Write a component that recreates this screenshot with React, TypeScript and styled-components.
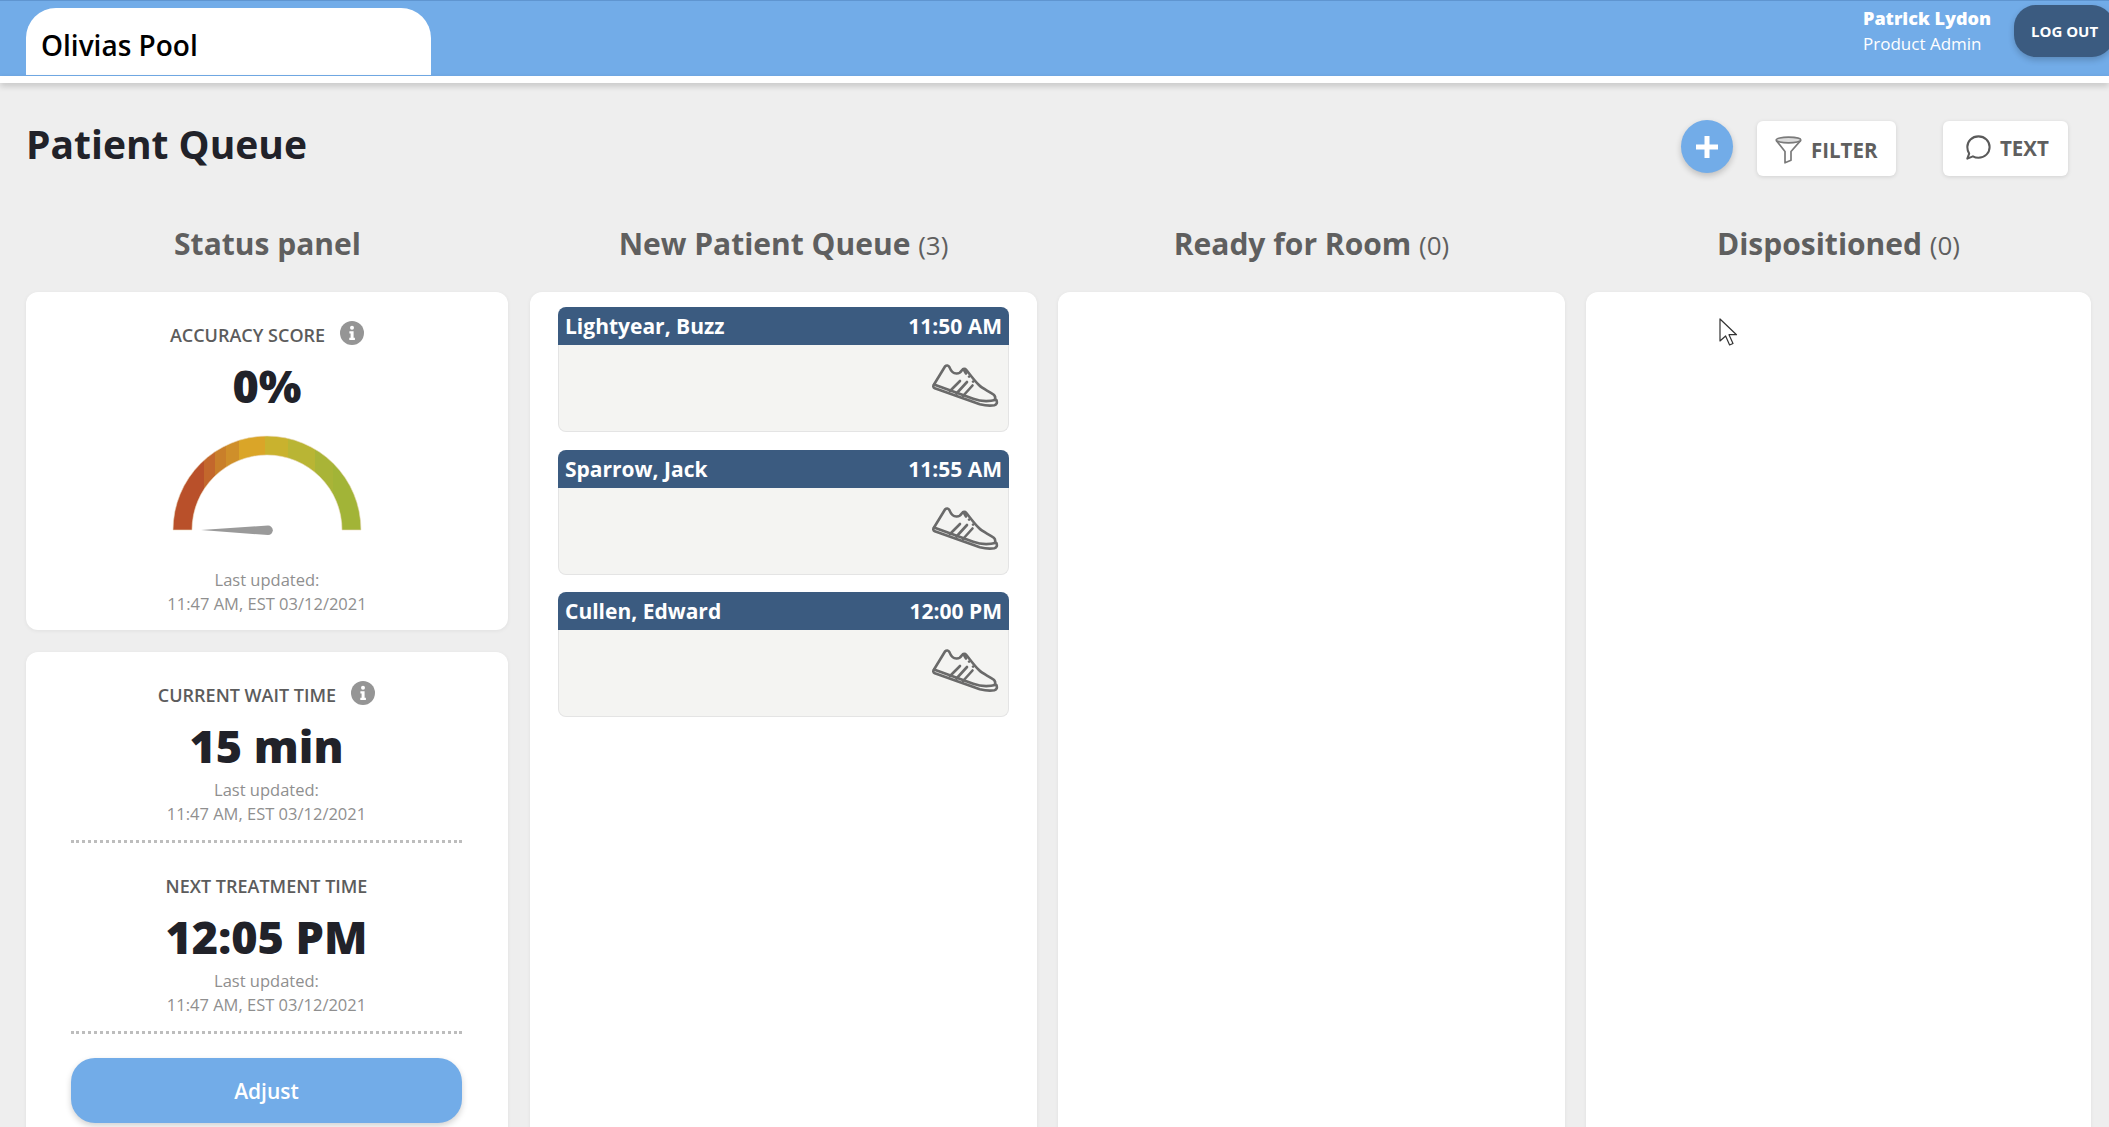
import styled, { createGlobalStyle } from "styled-components";

const patients = [
  { name: "Lightyear, Buzz", time: "11:50 AM" },
  { name: "Sparrow, Jack", time: "11:55 AM" },
  { name: "Cullen, Edward", time: "12:00 PM" },
];

// gauge colours come in vertical bands, [end x in svg units, colour]
const gaugeBands: [number, string][] = [
  [36.7, "#b9502a"],
  [47.7, "#c3672c"],
  [58.7, "#c97f2a"],
  [72, "#cf8f2a"],
  [97.7, "#daa528"],
  [121, "#c9b22e"],
  [147.7, "#b9b534"],
  [166, "#a9b437"],
  [194, "#a2b437"],
];

function Gauge() {
  return (
    <GaugeSvg width="200" height="110" viewBox="0 0 200 110">
      <defs>
        <linearGradient id="gaugeBands" gradientUnits="userSpaceOnUse" x1="6" y1="0" x2="194" y2="0">
          {gaugeBands.map(([end, color], i) => {
            const from = i === 0 ? 0 : (gaugeBands[i - 1][0] - 6) / 188;
            const to = (end - 6) / 188;
            return [
              <stop key={color + "a"} offset={from} stopColor={color} />,
              <stop key={color + "b"} offset={to} stopColor={color} />,
            ];
          })}
        </linearGradient>
      </defs>
      <path
        d="M6 97A94 94 0 0 1 194 97H175A75 75 0 0 0 25 97Z"
        fill="url(#gaugeBands)"
        stroke="#ecdcc0"
        strokeWidth="0.6"
      />
      <path d="M34 97L101 92.500a4.800 4.800 0 0 1 0 9.600L34 97Z" fill="#9a9a9a" />
    </GaugeSvg>
  );
}

function InfoIcon() {
  return (
    <svg width="24" height="24" viewBox="0 0 24 24">
      <circle cx="12" cy="12" r="12" fill="#959595" />
      <circle cx="12" cy="6.800" r="2" fill="#fff" />
      <path d="M9.400 10.200h4.200v6.600h1.300v2.200H9.300v-2.200h1.300v-4.400H9.400z" fill="#fff" />
    </svg>
  );
}

function ShoeIcon() {
  return (
    <svg width="68" height="44" viewBox="0 0 68 44" fill="none" stroke="#6a6a6a" strokeWidth="2.600" strokeLinejoin="round" strokeLinecap="round">
      <path d="M3 21.500L14 3.500c1.500-1.600 3.400-1.400 4.400.6 1.400 3.600 3.600 6.300 7 6.400 3 .1 4.500-1.400 5.600-3.400 1-1.500 3-1.700 4.200-.3 3.400 4 7.400 10 13 15.500 3.600 3.600 9.400 5.600 14.600 9.400 1.800 1.400 1.600 3.200 1.200 5" />
      <path d="M3 21.500c-1.200 1.600-.8 3 .8 3.800l45 16c4 1 11 1.600 14.600 1 2.400-.6 3.200-3 1.800-5.600-8 2.200-16 1.600-23-.9L3 21.500" />
      <path d="M19 28l10-10M25.500 30.500l10.500-11.500M32 33l9.500-10.500" />
      <path d="M33 7l2 3.500M38 13.600l.1.1M42 18.600l.1.1" />
    </svg>
  );
}

function FunnelIcon() {
  return (
    <svg width="27" height="28" viewBox="0 0 27 28" fill="none" stroke="#7a7a7a" strokeWidth="1.700" strokeLinejoin="round">
      <path d="M1.200 4.400L10 15.500v11.300l6-2.500v-8.800L25.800 4.400" fill="#fff" />
      <ellipse cx="13.500" cy="4" rx="12.300" ry="2.800" fill="#dcdcdc" />
    </svg>
  );
}

function BubbleIcon() {
  return (
    <svg width="26" height="27" viewBox="0 0 28 28" fill="none" stroke="#5a5a5a" strokeWidth="2.200" strokeLinejoin="round">
      <path d="M14.500 2C21.400 2 26.500 7 26.500 13.500S21.400 25 14.500 25c-2.200 0-4.200-.5-6-1.500L2.500 26l2-5.400C3.200 18.600 2.500 16.200 2.500 13.500 2.500 7 7.600 2 14.500 2Z" />
    </svg>
  );
}

export default function App() {
  return (
    <Page>
      <GlobalStyle />
      <Header>
        <PoolTab>Olivias Pool</PoolTab>
        <HeaderRight>
          <UserBlock>
            <UserName>Patrick Lydon</UserName>
            <UserRole>Product Admin</UserRole>
          </UserBlock>
          <LogOutButton>LOG OUT</LogOutButton>
        </HeaderRight>
      </Header>
      <HeaderStrip />
      <Main>
        <TitleRow>
          <PageTitle>Patient Queue</PageTitle>
          <Actions>
            <AddButton>
              <svg width="22" height="22" viewBox="0 0 22 22">
                <path d="M8.500 0h5v8.500H22v5h-8.500V22h-5v-8.500H0v-5h8.500z" fill="#fff" />
              </svg>
            </AddButton>
            <FilterButton>
              <FunnelIcon />
              FILTER
            </FilterButton>
            <TextButton>
              <BubbleIcon />
              TEXT
            </TextButton>
          </Actions>
        </TitleRow>
        <Board>
          <Column>
            <ColumnTitle>Status panel</ColumnTitle>
            <StatusStack>
              <ScoreCard>
                <MetricLabel>
                  ACCURACY SCORE
                  <InfoIcon />
                </MetricLabel>
                <MetricValue>0%</MetricValue>
                <Gauge />
                <Updated>
                  Last updated:
                  <br />
                  11:47 AM, EST 03/12/2021
                </Updated>
              </ScoreCard>
              <TimesCard>
                <MetricLabel>
                  CURRENT WAIT TIME
                  <InfoIcon />
                </MetricLabel>
                <MetricValue>15 min</MetricValue>
                <Updated>
                  Last updated:
                  <br />
                  11:47 AM, EST 03/12/2021
                </Updated>
                <DottedRule />
                <MetricLabel>NEXT TREATMENT TIME</MetricLabel>
                <MetricValue>12:05 PM</MetricValue>
                <Updated>
                  Last updated:
                  <br />
                  11:47 AM, EST 03/12/2021
                </Updated>
                <DottedRule />
                <AdjustButton>Adjust</AdjustButton>
              </TimesCard>
            </StatusStack>
          </Column>
          <Column>
            <ColumnTitle>
              New Patient Queue <Count>(3)</Count>
            </ColumnTitle>
            <QueuePanel>
              {patients.map((p) => (
                <PatientCard key={p.name}>
                  <PatientHead>
                    <span>{p.name}</span>
                    <span>{p.time}</span>
                  </PatientHead>
                  <PatientBody>
                    <ShoeIcon />
                  </PatientBody>
                </PatientCard>
              ))}
            </QueuePanel>
          </Column>
          <Column>
            <ColumnTitle>
              Ready for Room <Count>(0)</Count>
            </ColumnTitle>
            <QueuePanel />
          </Column>
          <Column>
            <ColumnTitle>
              Dispositioned <Count>(0)</Count>
            </ColumnTitle>
            <QueuePanel />
          </Column>
        </Board>
      </Main>
      <Cursor width="22" height="30" viewBox="0 0 22 30">
        <path d="M2 2v22l5.600-5 4 9 3.400-1.500-4-8.800h7.500L2 2Z" fill="#fff" stroke="#333" strokeWidth="1.200" strokeLinejoin="round" />
      </Cursor>
    </Page>
  );
}

const GlobalStyle = createGlobalStyle`
  html, body {
    margin: 0;
    padding: 0;
    height: 100%;
    overflow: hidden;
    background: #eeeeee;
  }
  * {
    box-sizing: border-box;
  }
`;

const Page = styled.div`
  position: relative;
  width: 2109px;
  height: 1127px;
  overflow: hidden;
  background: #eeeeee;
  font-family: "Open Sans", sans-serif;
`;

const Header = styled.header`
  height: 76px;
  background: #72ace8;
  border-top: 1px solid #5f95d0;
  display: flex;
  align-items: flex-end;
  justify-content: space-between;
  padding-left: 26px;
`;

const PoolTab = styled.div`
  width: 405px;
  height: 67px;
  margin-bottom: 1px;
  background: #fff;
  border-radius: 30px 30px 0 0;
  padding: 19px 0 0 15px;
  font-size: 28px;
  line-height: 36px;
  font-weight: 600;
  color: #000;
`;

const HeaderRight = styled.div`
  display: flex;
  align-self: flex-start;
  gap: 23px;
`;

const UserBlock = styled.div`
  padding-top: 5px;
  color: #fff;
`;

const UserName = styled.div`
  font-size: 18px;
  line-height: 25px;
  font-weight: 800;
`;

const UserRole = styled.div`
  font-size: 17px;
  line-height: 25px;
  font-weight: 400;
`;

const LogOutButton = styled.button`
  width: 100px;
  height: 52px;
  margin-top: 4px;
  margin-right: -5px;
  border: 0;
  border-radius: 22px;
  background: #3b5b80;
  box-shadow: 0 3px 6px rgba(0, 0, 0, 0.2);
  color: #fff;
  font-family: inherit;
  font-size: 15px;
  font-weight: 700;
  text-align: left;
  padding: 0 0 0 17px;
`;

const HeaderStrip = styled.div`
  height: 7px;
  background: #fff;
  box-shadow: 0 3px 6px rgba(0, 0, 0, 0.18);
  position: relative;
`;

const Main = styled.main`
  padding: 0 18px 0 26px;
`;

const TitleRow = styled.div`
  height: 128px;
  display: flex;
  justify-content: space-between;
  align-items: flex-start;
`;

const PageTitle = styled.h1`
  margin: 35px 0 0;
  font-size: 39px;
  line-height: 52px;
  font-weight: 700;
  color: #212229;
`;

const Actions = styled.div`
  display: flex;
  align-items: flex-start;
  padding: 37px 23px 0 0;
`;

const AddButton = styled.button`
  width: 52px;
  height: 53px;
  border: 0;
  border-radius: 50%;
  background: #72ace8;
  box-shadow: 0 3px 6px rgba(0, 0, 0, 0.2);
  display: flex;
  align-items: center;
  justify-content: center;
  padding: 0;
  margin-right: 24px;
`;

const ToolButton = styled.button`
  height: 55px;
  margin-top: 1px;
  border: 0;
  border-radius: 6px;
  background: #fff;
  box-shadow: 0 1px 4px rgba(0, 0, 0, 0.12);
  display: flex;
  align-items: center;
  color: #5f5f5f;
  font-family: inherit;
  font-size: 20.500px;
  font-weight: 700;
`;

const FilterButton = styled(ToolButton)`
  width: 139px;
  padding: 3px 0 0 18px;
  gap: 9px;
  margin-right: 47px;
`;

const TextButton = styled(ToolButton)`
  width: 125px;
  padding: 0 0 2px 22px;
  gap: 9px;
`;

const Board = styled.div`
  display: grid;
  grid-template-columns: 483px 507px 507px 505px;
  column-gap: 21px;
  align-items: start;
`;

const Column = styled.section`
  display: flex;
  flex-direction: column;
`;

const ColumnTitle = styled.h2`
  margin: 0;
  height: 81px;
  padding-top: 13px;
  text-align: center;
  font-size: 30px;
  line-height: 40px;
  font-weight: 700;
  color: #5f5f5f;
  white-space: nowrap;
`;

const Count = styled.span`
  font-size: 26px;
  font-weight: 400;
`;

const StatusStack = styled.div`
  width: 482px;
  display: flex;
  flex-direction: column;
  gap: 22px;
`;

const Panel = styled.div`
  background: #fff;
  border-radius: 12px;
  box-shadow: 0 1px 4px rgba(0, 0, 0, 0.06);
`;

const ScoreCard = styled(Panel)`
  height: 338px;
  padding-top: 28px;
  display: flex;
  flex-direction: column;
  align-items: center;
`;

const TimesCard = styled(Panel)`
  height: 560px;
  padding: 28px 46px 0 45px;
  display: flex;
  flex-direction: column;
  align-items: center;
`;

const MetricLabel = styled.div`
  display: flex;
  align-items: flex-start;
  gap: 15px;
  font-size: 18px;
  line-height: 30px;
  font-weight: 600;
  color: #5c5c5c;
  white-space: nowrap;

  svg {
    margin-top: 1px;
  }
`;

const MetricValue = styled.div`
  font-size: 45px;
  line-height: 60px;
  font-weight: 800;
  color: #212229;
  margin: 6px 0 2px;
  white-space: nowrap;
`;

const GaugeSvg = styled.svg`
  display: block;
  margin: 15px 0 25px;
`;

const Updated = styled.div`
  font-size: 16.500px;
  line-height: 24px;
  color: #8f8f8f;
  text-align: center;
  white-space: nowrap;
`;

const DottedRule = styled.div`
  width: 100%;
  height: 0;
  border-top: 3px dotted #bdbdbd;
  margin: 14px 0 28px;
`;

const AdjustButton = styled.button`
  width: 100%;
  height: 65px;
  flex: none;
  margin-top: -4px;
  border: 0;
  border-radius: 24px;
  background: #72ace8;
  box-shadow: 0 3px 6px rgba(0, 0, 0, 0.18);
  color: #fff;
  font-family: inherit;
  font-size: 21px;
  font-weight: 600;
`;

const QueuePanel = styled(Panel)`
  height: 900px;
  padding: 15px 28px 0;
  display: flex;
  flex-direction: column;
  gap: 17.500px;
`;

const PatientCard = styled.article`
  height: 125px;
  display: flex;
  flex-direction: column;
`;

const PatientHead = styled.div`
  height: 38px;
  flex: none;
  background: #3b5b80;
  border-radius: 8px 8px 0 0;
  padding: 0 7px;
  display: flex;
  align-items: center;
  justify-content: space-between;
  color: #fff;
  font-size: 21px;
  font-weight: 700;
`;

const PatientBody = styled.div`
  flex: 1;
  background: #f4f4f2;
  border: 1px solid #e4e4e4;
  border-top: 0;
  border-radius: 0 0 8px 8px;
  display: flex;
  justify-content: flex-end;
  align-items: flex-start;
  padding: 18px 9px 0 0;
`;

const Cursor = styled.svg`
  position: absolute;
  left: 1718px;
  top: 317px;
`;
